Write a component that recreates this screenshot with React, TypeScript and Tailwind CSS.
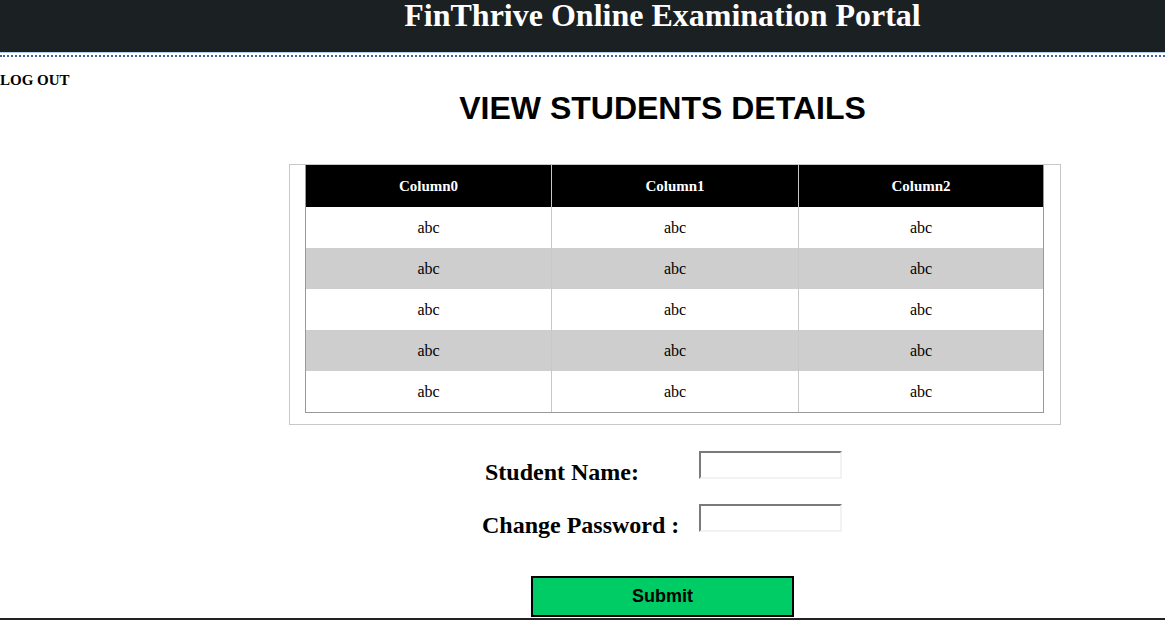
import React from "react";

const serif = { fontFamily: '"Liberation Serif", "Times New Roman", serif' };
const sans = { fontFamily: '"Liberation Sans", Arial, sans-serif' };

const columns = ["Column0", "Column1", "Column2"];
const rows = [0, 1, 2, 3, 4].map(() => ["abc", "abc", "abc"]);

export default function App() {
  return (
    <div className="min-h-[620px] bg-white text-black">
      {/* header */}
      <header className="h-[53px] bg-[#1b2022] border-b border-[#b4cdf0] pl-[160px] pt-[1px]">
        <h1 style={serif} className="text-center text-[32px] leading-[28px] font-bold text-white">
          FinThrive Online Examination Portal
        </h1>
      </header>
      <div className="mt-[2px] border-t-2 border-dotted border-[#4a5f9c]"></div>

      <div className="flex">
        {/* sidebar */}
        <aside className="w-[160px] shrink-0 pt-[15px]">
          <a style={serif} className="block text-[15px] leading-[17px] font-bold cursor-pointer">
            LOG OUT
          </a>
        </aside>

        {/* main */}
        <main className="flex-1 pt-[33px]">
          <h2 style={sans} className="text-center text-[32px] leading-[36px] font-bold">
            VIEW STUDENTS DETAILS
          </h2>

          <div className="mt-[38px] ml-[129px] w-[772px] border border-[#c8c8c8] pl-[15px] pr-[16px] pb-[11px]">
            <div className="border-x border-b border-[#999999]">
              <div className="grid grid-cols-[246px_247px_1fr] bg-black h-[42px]">
                {columns.map((c, i) => (
                  <div
                    key={c}
                    style={serif}
                    className={`flex items-center justify-center text-[15px] font-bold text-white ${
                      i < 2 ? "border-r border-[#c8c8c8]" : ""
                    }`}
                  >
                    {c}
                  </div>
                ))}
              </div>
              {rows.map((r, ri) => (
                <div
                  key={ri}
                  className={`grid grid-cols-[246px_247px_1fr] h-[41px] ${
                    ri % 2 === 1 ? "bg-[#cecece]" : "bg-white"
                  }`}
                >
                  {r.map((cell, ci) => (
                    <div
                      key={ci}
                      style={serif}
                      className={`flex items-center justify-center text-[16px] ${
                        ci < 2 ? "border-r border-[#c8c8c8]" : ""
                      }`}
                    >
                      {cell}
                    </div>
                  ))}
                </div>
              ))}
            </div>
          </div>

          {/* form */}
          <div className="ml-[322px] w-[360px] mt-[26px]">
            <div className="flex items-start h-[28px]">
              <label style={serif} className="w-[217px] pl-[3px] mt-[7px] text-[24px] leading-[28px] font-bold">
                Student Name:
              </label>
              <input
                type="text"
                className="w-[143px] h-[28px] border-2 border-t-[#7a7a7a] border-l-[#7a7a7a] border-r-[#f2f2f2] border-b-[#f2f2f2] bg-white outline-none"
              />
            </div>
            <div className="flex items-start h-[28px] mt-[25px]">
              <label style={serif} className="w-[217px] mt-[7px] text-[24px] leading-[28px] font-bold">
                Change Password :
              </label>
              <input
                type="password"
                className="w-[143px] h-[28px] border-2 border-t-[#7a7a7a] border-l-[#7a7a7a] border-r-[#f2f2f2] border-b-[#f2f2f2] bg-white outline-none"
              />
            </div>
          </div>

          <div className="flex justify-center mt-[44px]">
            <button
              style={sans}
              className="w-[263px] h-[41px] bg-[#00cc66] border-2 border-black text-[18px] font-bold"
            >
              Submit
            </button>
          </div>
        </main>
      </div>

      <footer className="mt-[1px] h-[40px] bg-[#222222]"></footer>
    </div>
  );
}
